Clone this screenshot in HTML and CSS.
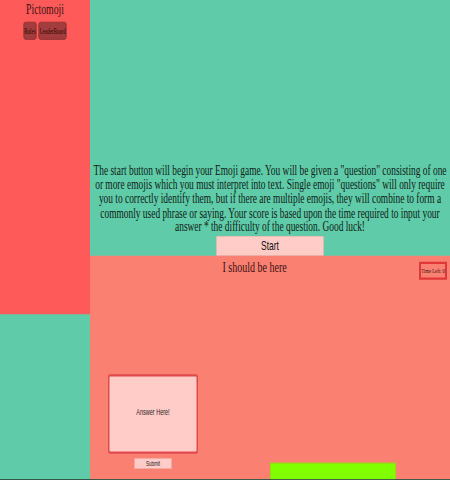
FILE: index.html
```html
<!DOCTYPE html>
<html>
<head>
<meta charset="utf-8">
<title>Pictomoji</title>
<link rel="stylesheet" href="styles.css">
</head>
<body>
<div class="page">
  <aside class="sidebar">
    <h1 class="title">Pictomoji</h1>
    <nav class="nav">
      <button class="nav-btn">Rules</button>
      <button class="nav-btn">LeaderBoard</button>
    </nav>
  </aside>
  <main class="main">
    <section class="intro">
      <p class="intro-text">The start button will begin your Emoji game. You will be given a "question" consisting of one or more emojis which you must interpret into text. Single emoji "questions" will only require you to correctly identify them, but if there are multiple emojis, they will combine to form a commonly used phrase or saying. Your score is based upon the time required to input your answer * the difficulty of the question. Good luck!</p>
      <button class="start-btn">Start</button>
    </section>
    <section class="game">
      <div class="game-head">
        <h2 class="question">I should be here</h2>
        <div class="timer">Time Left: 0</div>
      </div>
      <div class="game-body">
        <div class="answer">
          <textarea class="answer-box" placeholder="Answer Here!"></textarea>
          <button class="submit-btn">Submit</button>
        </div>
        <div class="bar"></div>
      </div>
    </section>
  </main>
</div>
</body>
</html>
```

FILE: styles.css
```css
html, body {
  margin: 0;
  padding: 0;
  width: 450px;
  height: 480px;
  overflow: hidden;
  background: #60cba8;
}

.page {
  box-sizing: border-box;
  width: 900px;
  height: 640px;
  display: grid;
  grid-template-columns: 180px 720px;
  align-items: start;
  transform: scale(0.5, 0.75);
  transform-origin: 0 0;
  background: #60cba8;
  border-bottom: 1.4px solid #263028;
  font-family: "Liberation Serif", "Times New Roman", serif;
  color: #1e1414;
  overflow: hidden;
}

.sidebar {
  height: 419px;
  background: #ff5a5a;
  display: flex;
  flex-direction: column;
  align-items: center;
}

.title {
  margin: 1px 0 0;
  font-size: 19.5px;
  font-weight: normal;
  line-height: 22px;
  color: #3a1212;
}

.nav {
  display: flex;
  gap: 4px;
  margin-top: 6px;
}

.nav-btn {
  height: 24px;
  padding: 0 1px;
  background: #a33c3c;
  border: 1px solid #7e2a2a;
  border-radius: 4px;
  font-family: "Liberation Serif", serif;
  font-size: 10px;
  color: #2a0a0a;
}

.main {
  display: flex;
  flex-direction: column;
  height: 639px;
}

.intro {
  flex-shrink: 0;
  height: 341px;
  display: flex;
  flex-direction: column;
  justify-content: flex-end;
  align-items: center;
}

.intro-text {
  margin: 0 0 3px;
  font-size: 18.8px;
  line-height: 18.7px;
  text-align: center;
  color: #0e1c16;
}

.start-btn {
  width: 214px;
  height: 26px;
  background: #ffccc8;
  border: 1px solid #f0b8b4;
  font-family: "Liberation Sans", Arial, sans-serif;
  font-size: 17px;
  color: #111;
  padding: 0;
}

.game {
  flex: 1;
  min-height: 0;
  overflow: hidden;
  background: #fa8072;
  display: flex;
  flex-direction: column;
}

.game-head {
  height: 32px;
  display: flex;
  align-items: flex-start;
}

.question {
  flex: 1;
  margin: 2px 0 0;
  text-align: center;
  font-size: 20px;
  font-weight: normal;
  line-height: 24px;
  color: #3a1010;
}

.timer {
  margin: 8px 6px 0 0;
  height: 18px;
  padding: 0;
  border-style: solid;
  border-color: #e0383a;
  border-width: 3px 4px;
  font-size: 9.5px;
  line-height: 18px;
  text-align: center;
  white-space: nowrap;
  color: #3a1010;
}

.game-body {
  display: flex;
  align-items: flex-start;
  padding-top: 126px;
}

.answer {
  margin-left: 36px;
  display: flex;
  flex-direction: column;
  align-items: center;
  gap: 6px;
}

.answer-box {
  box-sizing: border-box;
  width: 180px;
  height: 106px;
  background: #ffccc8;
  border: 3px solid #e04a4c;
  border-radius: 4px;
  resize: none;
  padding: 41px 6px 0;
  text-align: center;
  font-family: "Liberation Sans", Arial, sans-serif;
  font-size: 11px;
}

.answer-box::placeholder {
  color: #2a1a1a;
}

.submit-btn {
  width: 74px;
  height: 14px;
  padding: 0;
  background: #ffccc8;
  border: 1px solid #f2a8a2;
  font-family: "Liberation Sans", Arial, sans-serif;
  font-size: 9px;
  line-height: 12px;
  color: #222;
}

.bar {
  margin-left: 144px;
  margin-top: 118px;
  width: 252px;
  height: 40px;
  background: #7fff00;
  border: 1px solid #a8c020;
  box-sizing: border-box;
}
```
